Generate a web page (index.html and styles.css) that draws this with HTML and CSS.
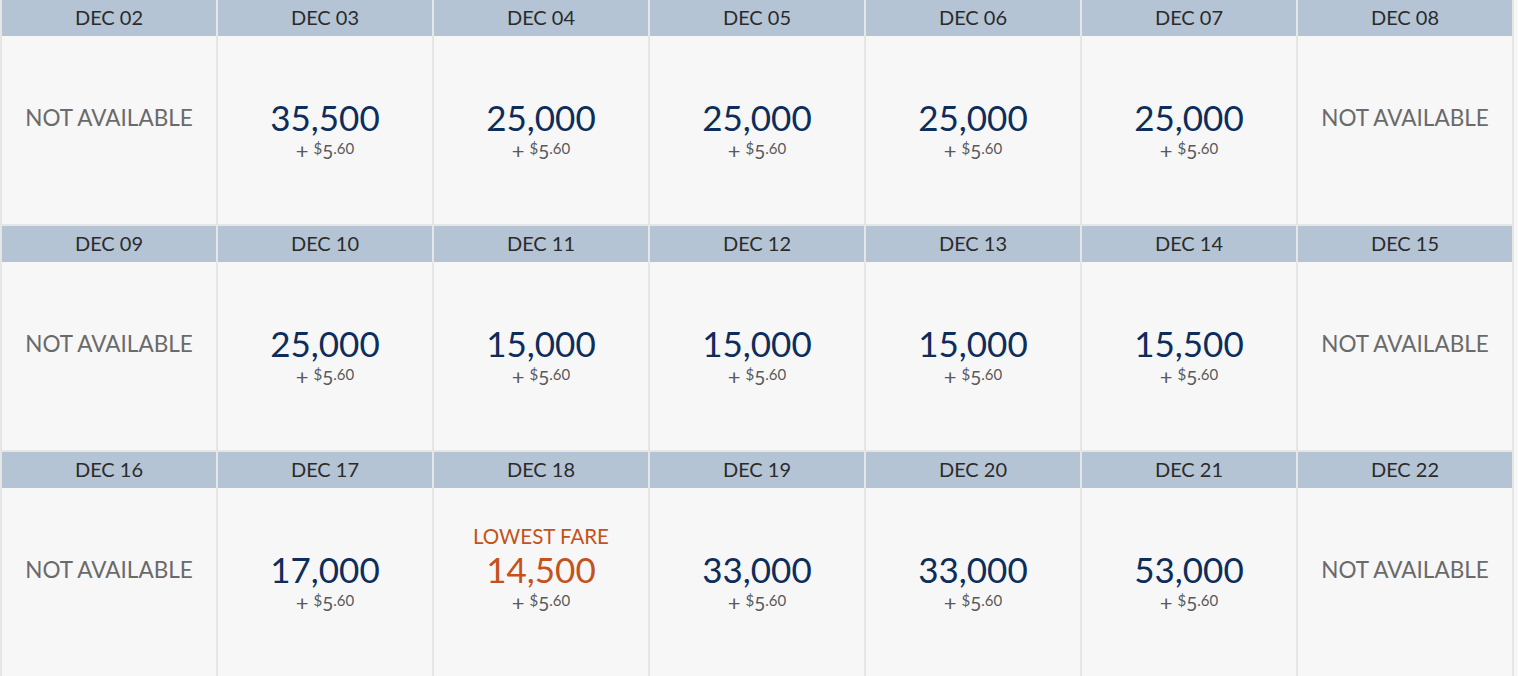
FILE: index.html
```html
<!DOCTYPE html>
<html>
<head>
<meta charset="utf-8">
<link rel="stylesheet" href="styles.css">
</head>
<body>
<div class="calendar">
  <div class="week">
    <div class="day"><div class="date">DEC 02</div><div class="cell"><div class="na">NOT AVAILABLE</div></div></div>
    <div class="day"><div class="date">DEC 03</div><div class="cell"><div class="label"></div><div class="price">35,500</div><div class="fee"><span class="plus">+</span> <sup>$</sup>5<sup>.60</sup></div></div></div>
    <div class="day"><div class="date">DEC 04</div><div class="cell"><div class="label"></div><div class="price">25,000</div><div class="fee"><span class="plus">+</span> <sup>$</sup>5<sup>.60</sup></div></div></div>
    <div class="day"><div class="date">DEC 05</div><div class="cell"><div class="label"></div><div class="price">25,000</div><div class="fee"><span class="plus">+</span> <sup>$</sup>5<sup>.60</sup></div></div></div>
    <div class="day"><div class="date">DEC 06</div><div class="cell"><div class="label"></div><div class="price">25,000</div><div class="fee"><span class="plus">+</span> <sup>$</sup>5<sup>.60</sup></div></div></div>
    <div class="day"><div class="date">DEC 07</div><div class="cell"><div class="label"></div><div class="price">25,000</div><div class="fee"><span class="plus">+</span> <sup>$</sup>5<sup>.60</sup></div></div></div>
    <div class="day"><div class="date">DEC 08</div><div class="cell"><div class="na">NOT AVAILABLE</div></div></div>
  </div>
  <div class="week">
    <div class="day"><div class="date">DEC 09</div><div class="cell"><div class="na">NOT AVAILABLE</div></div></div>
    <div class="day"><div class="date">DEC 10</div><div class="cell"><div class="label"></div><div class="price">25,000</div><div class="fee"><span class="plus">+</span> <sup>$</sup>5<sup>.60</sup></div></div></div>
    <div class="day"><div class="date">DEC 11</div><div class="cell"><div class="label"></div><div class="price">15,000</div><div class="fee"><span class="plus">+</span> <sup>$</sup>5<sup>.60</sup></div></div></div>
    <div class="day"><div class="date">DEC 12</div><div class="cell"><div class="label"></div><div class="price">15,000</div><div class="fee"><span class="plus">+</span> <sup>$</sup>5<sup>.60</sup></div></div></div>
    <div class="day"><div class="date">DEC 13</div><div class="cell"><div class="label"></div><div class="price">15,000</div><div class="fee"><span class="plus">+</span> <sup>$</sup>5<sup>.60</sup></div></div></div>
    <div class="day"><div class="date">DEC 14</div><div class="cell"><div class="label"></div><div class="price">15,500</div><div class="fee"><span class="plus">+</span> <sup>$</sup>5<sup>.60</sup></div></div></div>
    <div class="day"><div class="date">DEC 15</div><div class="cell"><div class="na">NOT AVAILABLE</div></div></div>
  </div>
  <div class="week">
    <div class="day"><div class="date">DEC 16</div><div class="cell"><div class="na">NOT AVAILABLE</div></div></div>
    <div class="day"><div class="date">DEC 17</div><div class="cell"><div class="label"></div><div class="price">17,000</div><div class="fee"><span class="plus">+</span> <sup>$</sup>5<sup>.60</sup></div></div></div>
    <div class="day"><div class="date">DEC 18</div><div class="cell lowest"><div class="label">LOWEST FARE</div><div class="price">14,500</div><div class="fee"><span class="plus">+</span> <sup>$</sup>5<sup>.60</sup></div></div></div>
    <div class="day"><div class="date">DEC 19</div><div class="cell"><div class="label"></div><div class="price">33,000</div><div class="fee"><span class="plus">+</span> <sup>$</sup>5<sup>.60</sup></div></div></div>
    <div class="day"><div class="date">DEC 20</div><div class="cell"><div class="label"></div><div class="price">33,000</div><div class="fee"><span class="plus">+</span> <sup>$</sup>5<sup>.60</sup></div></div></div>
    <div class="day"><div class="date">DEC 21</div><div class="cell"><div class="label"></div><div class="price">53,000</div><div class="fee"><span class="plus">+</span> <sup>$</sup>5<sup>.60</sup></div></div></div>
    <div class="day"><div class="date">DEC 22</div><div class="cell"><div class="na">NOT AVAILABLE</div></div></div>
  </div>
</div>
</body>
</html>
```

FILE: styles.css
```css
html, body {
  margin: 0;
  padding: 0;
  background: #f7f7f7;
  height: 100%;
  overflow: hidden;
}
body {
  font-family: Lato, "Open Sans", sans-serif;
}
.calendar {
  width: 1514px;
  background: #e6e6e6;
  display: flex;
  flex-direction: column;
  gap: 2px;
}
.week {
  display: grid;
  grid-template-columns: repeat(7, 214px);
  column-gap: 2px;
  padding: 0 2px;
}
.day {
  display: flex;
  flex-direction: column;
  background: #f7f7f7;
}
.date {
  height: 36px;
  background: #b4c4d5;
  color: #2b2b2b;
  font-size: 20px;
  line-height: 34px;
  text-align: center;
}
.cell {
  height: 188px;
  display: flex;
  flex-direction: column;
  align-items: center;
  padding-top: 36px;
  box-sizing: border-box;
}
.label {
  height: 27px;
  font-size: 20.5px;
  line-height: 24px;
  color: #c4521a;
}
.price {
  font-size: 35px;
  line-height: 36px;
  color: #0d2d5b;
}
.lowest .price {
  color: #c4521a;
}
.fee {
  font-size: 19px;
  line-height: 32px;
  color: #5a5a5a;
}
.fee .plus {
  font-size: 22px;
}
.fee sup {
  font-size: 15px;
  line-height: 0;
  vertical-align: 5px;
}
.na {
  margin-top: 31px;
  font-size: 22.5px;
  line-height: 30px;
  color: #6a6a6a;
}
```
